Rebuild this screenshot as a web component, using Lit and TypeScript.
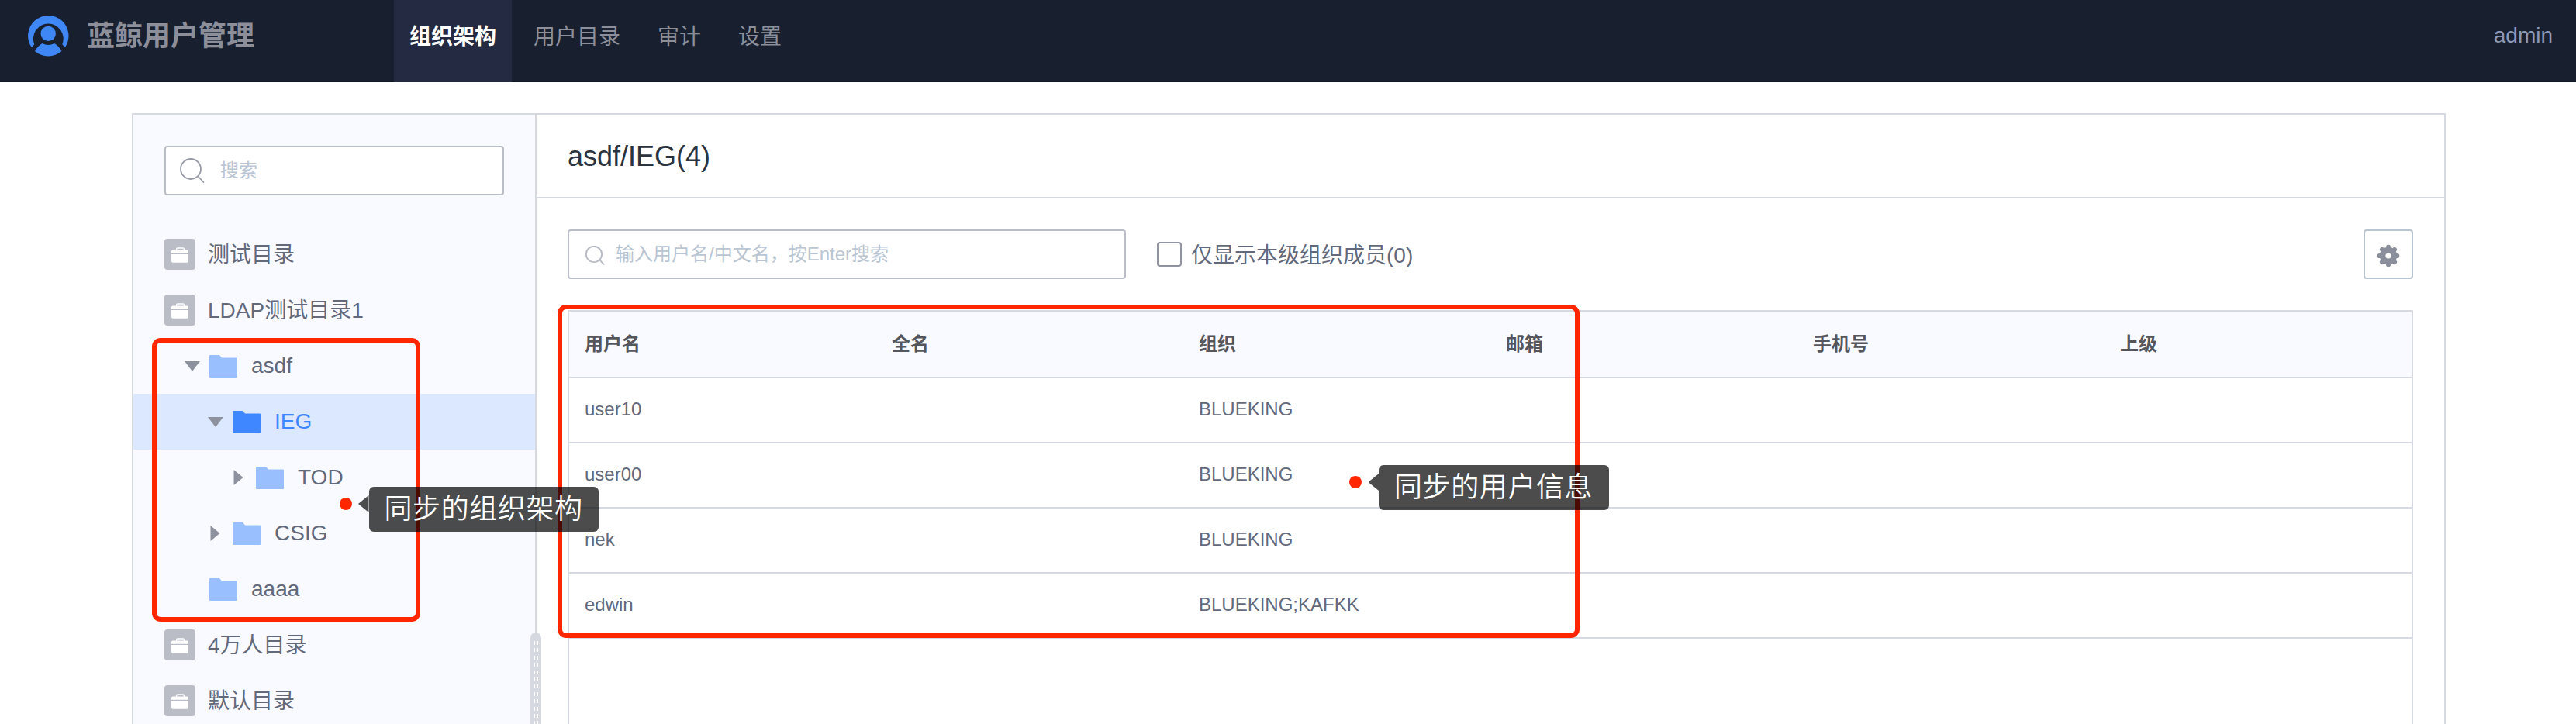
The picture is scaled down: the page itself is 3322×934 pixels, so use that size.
import { LitElement, html, css, svg } from "lit";
import { customElement } from "lit/decorators.js";
import { classMap } from "lit/directives/class-map.js";

type Row = { kind: "dir" | "node"; label: string; level?: number; open?: "open" | "closed" | "none"; active?: boolean };

const TREE: Row[] = [
  { kind: "dir", label: "测试目录" },
  { kind: "dir", label: "LDAP测试目录1" },
  { kind: "node", label: "asdf", level: 0, open: "open" },
  { kind: "node", label: "IEG", level: 1, open: "open", active: true },
  { kind: "node", label: "TOD", level: 2, open: "closed" },
  { kind: "node", label: "CSIG", level: 1, open: "closed" },
  { kind: "node", label: "aaaa", level: 0, open: "none" },
  { kind: "dir", label: "4万人目录" },
  { kind: "dir", label: "默认目录" },
];

const COLUMNS = ["用户名", "全名", "组织", "邮箱", "手机号", "上级"];
const USERS = [
  ["user10", "", "BLUEKING", "", "", ""],
  ["user00", "", "BLUEKING", "", "", ""],
  ["nek", "", "BLUEKING", "", "", ""],
  ["edwin", "", "BLUEKING;KAFKK", "", "", ""],
];

const gearPath = () => {
  const teeth = Array.from({ length: 8 }, (_, i) => svg`<rect x="-3" y="-14.3" width="6" height="8" rx="2.8" transform="rotate(${i * 45})"/>`);
  return svg`<g transform="translate(15 15)" fill="#8b8f9b">${teeth}<circle r="7.4" fill="none" stroke="#8b8f9b" stroke-width="7.6"/></g>`;
};

@customElement("app-root")
export class AppRoot extends LitElement {
  static styles = css`
    :host {
      display: flex;
      flex-direction: column;
      position: relative;
      width: 3322px;
      height: 934px;
      overflow: hidden;
      background: #fff;
      font-family: "Liberation Sans", "Noto Sans CJK SC", sans-serif;
      font-size: 28px;
      color: #63697a;
    }
    * { box-sizing: border-box; }
    svg { display: block; flex: none; }
    .header {
      flex: none;
      display: flex;
      height: 106px;
      background: #182030;
      border-bottom: 1px solid #10162a;
      padding: 0 30px 0 36px;
      line-height: 92px;
    }
    .brand { display: flex; width: 472px; gap: 23px; }
    .logo { margin-top: 20px; }
    .name { font-size: 36px; font-weight: 700; color: #8c8f9a; line-height: 94px; }
    .nav { display: flex; gap: 8px; flex: 1; }
    .tab { padding: 0 20px; color: #8c8f9a; height: 106px; line-height: 95px; }
    .tab.on { background: #232a42; color: #fff; font-weight: 700; }
    .admin { color: #8d99b8; }
    .panel {
      flex: none;
      display: flex;
      width: 2984px;
      height: 800px;
      margin: 40px 0 0 170px;
      border: 2px solid #d6d9e0;
    }
    .side {
      width: 520px;
      flex: none;
      background: #f9faff;
      border-right: 2px solid #d6d9e0;
      padding-top: 40px;
    }
    .input {
      display: flex;
      align-items: center;
      height: 64px;
      border: 2px solid #babdc6;
      border-radius: 4px;
      background: #fff;
      color: #b9c5d2;
      font-size: 24px;
      line-height: 60px;
    }
    .side .input { margin: 0 40px 40px; padding-left: 18px; gap: 20px; }
    .row { display: flex; align-items: center; height: 72px; padding-left: 40px; line-height: 72px; }
    .row.active { background: #dce8ff; color: #3f87ff; }
    .dirlabel { margin-left: 16px; padding-top: 2px; }
    .caret { width: 20px; margin: 0 12px 0 26px; display: flex; justify-content: center; }
    .indent { flex: none; }
    .nodelabel { margin-left: 18px; }
    .main { flex: 1; display: flex; flex-direction: column; min-width: 0; }
    .title {
      height: 108px;
      flex: none;
      border-bottom: 2px solid #d6d9e0;
      padding-left: 40px;
      font-size: 36px;
      line-height: 107px;
      color: #2b333e;
    }
    .tools { display: flex; align-items: center; margin: 40px 40px 40px; height: 64px; flex: none; }
    .tools .input { width: 720px; padding-left: 21px; gap: 14px; }
    .tools .input svg { margin-top: 2px; }
    .check { width: 32px; height: 32px; border: 2px solid #8e939f; border-radius: 4px; margin: 0 12px 0 40px; background: #fff; }
    .checklabel { padding-bottom: 2px; }
    .gear {
      margin-left: auto;
      width: 64px;
      height: 64px;
      border: 2px solid #b9c4d1;
      border-radius: 4px;
      display: flex;
      align-items: center;
      justify-content: center;
      padding-top: 4px;
    }
    .table { margin: 0 40px; flex: 1; border: 2px solid #d6d9e0; border-bottom: 0; font-size: 24px; }
    .tr { display: grid; grid-template-columns: repeat(6, 396px); height: 84px; line-height: 80px; border-bottom: 2px solid #d6d9e0; }
    .td { padding-left: 20px; }
    .tr.th { height: 86px; background: #f9faff; font-weight: 700; color: #55565c; line-height: 83px; }
    .handle {
      position: absolute;
      left: 684px;
      top: 816px;
      width: 14px;
      height: 160px;
      border-radius: 7px;
      background: #d6d9e0;
      display: flex;
      justify-content: center;
      gap: 2px;
      padding-top: 11px;
    }
    .dots { width: 1.5px; background: repeating-linear-gradient(#fff 0 5px, transparent 5px 9.4px); }
    .mark { position: absolute; border: 6px solid #ff2600; border-radius: 11px; }
    .m1 { left: 196px; top: 436px; width: 346px; height: 366px; }
    .m2 { left: 719px; top: 393px; width: 1318px; height: 430px; }
    .dot { position: absolute; width: 16px; height: 16px; border-radius: 50%; background: #ff2600; }
    .d1 { left: 438px; top: 642px; }
    .d2 { left: 1740px; top: 614px; }
    .tip { position: absolute; display: flex; width: 310px; height: 58px; }
    .t1 { left: 462px; top: 628px; }
    .t2 { left: 1764.5px; top: 600px; }
    .arrow { width: 13.5px; height: 22px; margin-top: 11px; background: rgba(0, 0, 0, 0.7); clip-path: polygon(0 50%, 100% 0, 100% 100%); }
    .bubble {
      flex: 1;
      background: rgba(0, 0, 0, 0.7);
      border-radius: 6px;
      color: #fff;
      font-family: "Noto Sans CJK SC", sans-serif;
      font-size: 36px;
      font-weight: 350;
      letter-spacing: 0.6px;
      line-height: 51px;
      padding-left: 20px;
      white-space: nowrap;
    }
  `;

  private lens(size: number, color: string, sw: number) {
    return html`<svg width=${size} height=${size} viewBox="0 0 32 32" fill="none" stroke=${color} stroke-width=${sw}>
      <circle cx="14" cy="14" r="13" /><path d="M23 23L31 31.5" />
    </svg>`;
  }

  private row(r: Row) {
    if (r.kind === "dir") {
      return html`<div class="row">
        <svg width="40" height="40"><rect width="40" height="40" rx="4" fill="#babdc6" />
          <path d="M15.700 15v-2q0-1 1-1h7.600q1 0 1 1v2" fill="none" stroke="#fff" stroke-width="1.300" />
          <path d="M9 18.700v-2.200q0-2 2-2h18q2 0 2 2v2.200zM9 20h22v8.800q0 2-2 2h-18q-2 0-2-2z" fill="#fff" />
        </svg><span class="dirlabel">${r.label}</span></div>`;
    }
    const tri = r.open === "open"
      ? svg`<path d="M0 4h20l-10 13z"/>`
      : r.open === "closed" ? svg`<path d="M3.500 0l12 10l-12 10z"/>` : "";
    return html`<div class=${classMap({ row: true, active: !!r.active })}>
      <span class="indent" style="width:${r.level! * 30}px"></span>
      <span class="caret"><svg width="20" height="20" fill="#8e929e">${tri}</svg></span>
      <svg width="36" height="29" fill=${r.active ? "#3f87ff" : "#9abfff"}><path d="M0 1q0-1 1-1h12l3 3.500h19q1 0 1 1v23.500q0 1-1 1h-34q-1 0-1-1z"/></svg>
      <span class="nodelabel">${r.label}</span></div>`;
  }

  render() {
    return html`
      <div class="header">
        <div class="brand">
          <svg class="logo" width="53" height="53" viewBox="0 0 53 53" fill="#3f87f5">
            <path d="M4.700 41A26.200 26.200 0 1 1 47.900 41L44.300 37.200A19.400 19.400 0 1 0 8.300 37.200Z" />
            <circle cx="26.200" cy="23.400" r="9.700" />
            <path d="M18.500 36Q26.300 40 34.100 36Q39.500 39 43.500 46A26.200 26.200 0 0 1 8.900 46Q13 39 18.500 36Z" />
          </svg>
          <span class="name">蓝鲸用户管理</span>
        </div>
        <div class="nav">
          <div class="tab on">组织架构</div><div class="tab">用户目录</div><div class="tab">审计</div><div class="tab">设置</div>
        </div>
        <div class="admin">admin</div>
      </div>
      <div class="panel">
        <div class="side">
          <div class="input">${this.lens(32, "#979ba5", 1.8)}<span>搜索</span></div>
          ${TREE.map((r) => this.row(r))}
        </div>
        <div class="main">
          <div class="title">asdf/IEG(4)</div>
          <div class="tools">
            <div class="input">${this.lens(25, "#b9bcc6", 2.4)}<span>输入用户名/中文名，按Enter搜索</span></div>
            <div class="check"></div><span class="checklabel">仅显示本级组织成员(0)</span>
            <div class="gear"><svg width="30" height="30">${gearPath()}</svg></div>
          </div>
          <div class="table">
            <div class="tr th">${COLUMNS.map((c) => html`<div class="td">${c}</div>`)}</div>
            ${USERS.map((u) => html`<div class="tr">${u.map((c) => html`<div class="td">${c}</div>`)}</div>`)}
          </div>
        </div>
      </div>
      <div class="handle"><div class="dots"></div><div class="dots"></div></div>
      <div class="mark m1"></div>
      <div class="mark m2"></div>
      <div class="dot d1"></div>
      <div class="dot d2"></div>
      <div class="tip t1"><div class="arrow"></div><div class="bubble">同步的组织架构</div></div>
      <div class="tip t2"><div class="arrow"></div><div class="bubble">同步的用户信息</div></div>
    `;
  }
}
